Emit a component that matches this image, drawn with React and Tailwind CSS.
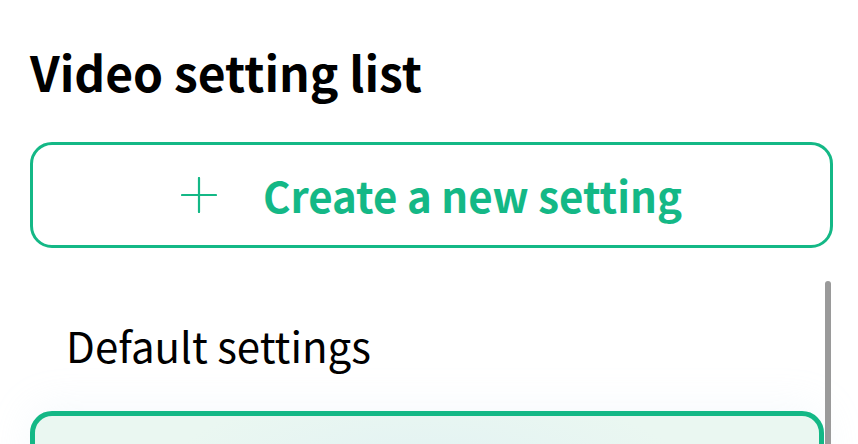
export default function App() {
  return (
    <div
      className="relative w-[858px] h-[444px] overflow-hidden bg-white"
      style={{ fontFamily: '"Noto Sans CJK JP", "Noto Sans", sans-serif' }}
    >
      <div className="pl-[30px]">
        <h1 className="pt-[43px] text-[48px] leading-[56px] font-bold text-black">
          Video setting list
        </h1>
        <button className="mt-[43px] w-[803px] h-[106px] border-[3px] border-[#14b886] rounded-[22px] flex items-center justify-center gap-[46px] text-[#14b886] bg-white">
          <svg width="36" height="36" viewBox="0 0 36 36" fill="none">
            <path d="M18 1V35M1 18H35" stroke="#14b886" strokeWidth="2.2" strokeLinecap="round" />
          </svg>
          <span className="text-[42px] leading-[50px] font-bold">Create a new setting</span>
        </button>
        <div className="mt-[33px] w-[794px] pt-[39px]">
          <div className="pl-[36px] text-[42px] leading-[50px] text-black">Default settings</div>
          <div
            className="mt-[41px] h-[140px] border-[5px] border-[#14b886] rounded-[22px] shadow-[0_-4px_40px_rgba(200,220,240,0.18)]"
            style={{
              background:
                'radial-gradient(ellipse 260px 90px at 390px 60px, #e2f2f3 0%, #eaf7f1 100%)',
            }}
          />
        </div>
      </div>
      <div className="absolute left-[825px] top-[281px] w-[6px] h-[200px] rounded-full bg-[#9a9a9a]" />
    </div>
  );
}
